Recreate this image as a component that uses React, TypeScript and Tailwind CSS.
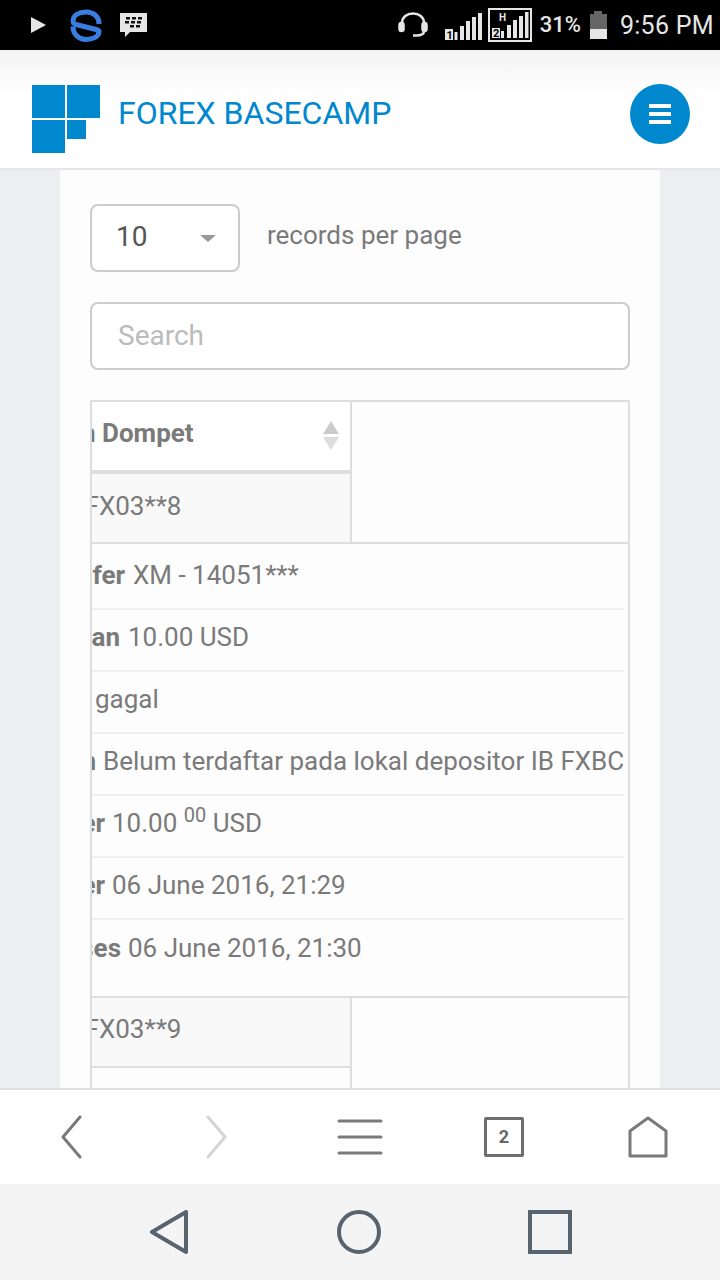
const FONT = "font-['Roboto',sans-serif]";

const DETAILS = [
  { label: "Akun Transfer", value: "XM - 14051***", clip: "w-[33px] mr-[8px]" },
  { label: "Permintaan", value: "10.00 USD", clip: "w-[28px] mr-[8px]" },
  { label: "Status", value: "gagal", clip: "w-0 mr-[3px]" },
  { label: "Keterangan", value: "Belum terdaftar pada lokal depositor IB FXBC", clip: "w-[4px] mr-[7px]" },
  { label: "Transfer", value: <>10.00 <sup className="text-[20px] leading-none">00</sup> USD</>, clip: "w-[13px] mr-[7px]" },
  { label: "Tgl Transfer", value: "06 June 2016, 21:29", clip: "w-[13px] mr-[7px]" },
  { label: "Tgl Proses", value: "06 June 2016, 21:30", clip: "w-[29px] mr-[7px]" },
];

function StatusBar() {
  return (
    <div className={`flex h-[50px] shrink-0 items-center bg-black pl-[31px] pr-[6px] ${FONT} text-[#e6e6e6]`}>
      <svg width="15" height="16" viewBox="0 0 15 16"><path d="M0 0l15 8-15 8z" fill="#e6e6e6" /></svg>
      <svg className="ml-[24px]" width="32" height="33" viewBox="0 0 32 33" fill="none" stroke="#3a7de0" strokeWidth="5" strokeLinejoin="round">
        <path d="M29 15C29 7 23 3 16 3 9 3 3 6 3 12c0 2 1 3 3 3.500l20 5c2 .5 3 1 3 2 0 5-6 8-13 8-7 0-13-5-13-13" />
      </svg>
      <svg className="ml-[17px]" width="28" height="26" viewBox="0 0 28 26">
        <path d="M1 1h27v19H11l-5 5v-5H1z" fill="#e6e6e6" />
        <g fill="#111">
          <rect x="7" y="5" width="4" height="2.5" /><rect x="13" y="5" width="4" height="2.5" /><rect x="19" y="5" width="4" height="2.5" />
          <rect x="6" y="9" width="4" height="2.5" /><rect x="12" y="9" width="4" height="2.5" /><rect x="18" y="9" width="4" height="2.5" />
          <rect x="11" y="13" width="4" height="2.5" /><rect x="17" y="13" width="4" height="2.5" />
        </g>
      </svg>
      <svg className="ml-auto" width="30" height="26" viewBox="0 0 30 26" fill="none" stroke="#e6e6e6" strokeWidth="2.5">
        <path d="M4 13V11C4 5 9 1.500 15 1.500S26 5 26 11v2" />
        <rect x="1.500" y="11" width="4" height="8" rx="2" fill="#e6e6e6" />
        <rect x="24.500" y="11" width="4" height="8" rx="2" fill="#e6e6e6" />
        <path d="M26 19c0 3-3 4.500-8 4.500h-3" />
      </svg>
      <svg className="ml-[17px] mt-[1px]" width="38" height="28" viewBox="0 0 38 28" fill="#e6e6e6">
        <rect x="0" y="17" width="8" height="11" /><rect x="9.500" y="20" width="3" height="8" /><rect x="15" y="14" width="4" height="14" />
        <rect x="21" y="9" width="4" height="19" /><rect x="27" y="5" width="4" height="23" /><rect x="33" y="1" width="4" height="27" />
        <text x="1.500" y="27" fontSize="11" fontWeight="700" fill="#000" fontFamily="Roboto, sans-serif">1</text>
      </svg>
      <svg className="ml-[5px]" width="44" height="34" viewBox="0 0 44 34" fill="#e6e6e6">
        <rect x="1" y="1" width="42" height="32" fill="none" stroke="#e6e6e6" strokeWidth="2" />
        <rect x="4" y="20" width="8" height="10" /><rect x="13" y="23" width="3" height="7" /><rect x="19" y="17" width="4" height="13" />
        <rect x="25" y="12" width="4" height="18" /><rect x="31" y="8" width="4" height="22" /><rect x="37" y="4" width="3.500" height="26" />
        <text x="5" y="29" fontSize="11" fontWeight="700" fill="#000" fontFamily="Roboto, sans-serif">2</text>
        <text x="11" y="13" fontSize="10" fontWeight="700" fill="#e6e6e6" fontFamily="Roboto, sans-serif">H</text>
      </svg>
      <span className="ml-[8px] text-[22px] font-medium leading-none">31%</span>
      <div className="ml-[9px] flex h-[28px] w-[17px] flex-col items-center">
        <div className="h-[3px] w-[8px] bg-[#666]" />
        <div className="h-[15px] w-full bg-[#666]" />
        <div className="h-[10px] w-full bg-[#e6e6e6]" />
      </div>
      <span className="ml-[13px] text-[25px] leading-none tracking-[0.3px]">9:56 PM</span>
    </div>
  );
}

function Header() {
  return (
    <div className="flex h-[120px] shrink-0 items-start border-b-2 border-[#e6e6e6] bg-gradient-to-b from-[#f3f3f3] to-white to-40% pl-[32px] pr-[30px] pt-[34px]">
      <svg className="mt-[1px]" width="68" height="68" viewBox="0 0 68 68" fill="#0088cf">
        <rect x="0" y="0" width="33" height="33" />
        <rect x="35" y="0" width="33" height="33" />
        <rect x="0" y="35" width="33" height="33" />
        <rect x="35" y="35" width="19" height="19" />
      </svg>
      <span className={`ml-[18px] mt-[13px] text-[32px] leading-[32px] text-[#0088cf] ${FONT}`}>FOREX BASECAMP</span>
      <button className="ml-auto flex h-[60px] w-[60px] flex-col items-center justify-center gap-[4px] rounded-full bg-[#0088cf]">
        <span className="h-[4px] w-[22px] bg-white" />
        <span className="h-[4px] w-[22px] bg-white" />
        <span className="h-[4px] w-[22px] bg-white" />
      </button>
    </div>
  );
}

function DataTable() {
  return (
    <div className="mt-[30px] w-[540px] border-x-2 border-t-2 border-[#dddddd] text-[26px] text-[#7a7a7a]">
      <div className="flex">
        <div className="w-[260px] border-r-2 border-[#dddddd]">
          <div className="flex h-[72px] items-center overflow-hidden whitespace-nowrap border-b-[4px] border-[#dddddd] bg-white pr-[10px] font-bold">
            <span className="mb-[6px] ml-[-11px]">n Dompet</span>
            <svg className="ml-auto" width="18" height="30" viewBox="0 0 18 30"><path d="M9 0l8 13H1z" fill="#cccccc" /><path d="M1 16h16l-8 13z" fill="#dddddd" /></svg>
          </div>
          <div className="flex h-[68px] items-center overflow-hidden whitespace-nowrap bg-[#f9f9f9] pb-[4px]">
            <span className="ml-[-26px]">NFX03**8</span>
          </div>
        </div>
      </div>
      <div className="flex flex-col border-t-2 border-[#dddddd] pb-[14px] pr-[4px] pt-[4px]">
        {DETAILS.map((d, i) => (
          <div key={d.label} className={`flex h-[62px] items-center whitespace-nowrap pb-[6px] ${i < DETAILS.length - 1 ? "border-b-2 border-[#f0f0f0]" : ""}`}>
            <span className={`flex shrink-0 justify-end overflow-hidden font-bold ${d.clip}`}><span className="shrink-0">{d.label}</span></span>
            <span>{d.value}</span>
          </div>
        ))}
      </div>
      <div className="flex border-t-2 border-[#dddddd]">
        <div className="w-[260px] border-r-2 border-[#dddddd]">
          <div className="flex h-[70px] items-center overflow-hidden whitespace-nowrap border-b-2 border-[#dddddd] bg-[#f9f9f9] pb-[6px]">
            <span className="ml-[-26px]">NFX03**9</span>
          </div>
          <div className="h-[40px]" />
        </div>
      </div>
    </div>
  );
}

function BrowserBar() {
  return (
    <div className="flex h-[96px] shrink-0 items-center border-t-2 border-[#e0e0e0] bg-white">
      <svg className="ml-[60px]" width="24" height="44" viewBox="0 0 24 44" fill="none" stroke="#7a7a7a" strokeWidth="3" strokeLinecap="round" strokeLinejoin="round"><path d="M20 2L3 22l17 20" /></svg>
      <svg className="ml-[120px]" width="24" height="44" viewBox="0 0 24 44" fill="none" stroke="#d4d4d4" strokeWidth="3" strokeLinecap="round" strokeLinejoin="round"><path d="M4 2l17 20L4 42" /></svg>
      <svg className="ml-[109px]" width="46" height="38" viewBox="0 0 46 38" fill="none" stroke="#7a7a7a" strokeWidth="3" strokeLinecap="round"><path d="M2 3h42M2 19h42M2 35h42" /></svg>
      <div className={`ml-[101px] flex h-[40px] w-[40px] items-center justify-center rounded-[2px] border-[3px] border-[#6e6e6e] text-[18px] font-bold leading-none text-[#666] ${FONT}`}>2</div>
      <svg className="ml-[104px]" width="40" height="42" viewBox="0 0 40 42" fill="none" stroke="#7a7a7a" strokeWidth="3" strokeLinejoin="round"><path d="M2 15L20 2l18 13v25H2z" /></svg>
    </div>
  );
}

function NavBar() {
  return (
    <div className="flex h-[96px] shrink-0 items-center bg-[#f4f4f4]">
      <svg className="ml-[149px]" width="40" height="44" viewBox="0 0 40 44" fill="none" stroke="#566470" strokeWidth="4" strokeLinejoin="round"><path d="M37 2v40L3 22z" /></svg>
      <svg className="ml-[148px]" width="44" height="44" viewBox="0 0 44 44" fill="none" stroke="#566470" strokeWidth="4"><circle cx="22" cy="22" r="20" /></svg>
      <svg className="ml-[147px]" width="44" height="44" viewBox="0 0 44 44" fill="none" stroke="#566470" strokeWidth="4"><rect x="2" y="2" width="40" height="40" /></svg>
    </div>
  );
}

export default function App() {
  return (
    <div className={`flex h-[1280px] w-[720px] flex-col overflow-hidden bg-[#eceef2] ${FONT}`}>
      <StatusBar />
      <Header />
      <main className="min-h-0 flex-1 overflow-hidden px-[60px]">
        <div className="h-full bg-[#fdfdfd] px-[30px] pt-[34px]">
          <div className="flex items-center">
            <div className="flex h-[68px] w-[150px] items-center justify-between rounded-[8px] border-2 border-[#cccccc] bg-white pl-[24px] pr-[22px] text-[28px] text-[#555555]">
              <span className="mb-[2px]">10</span>
              <span className="h-0 w-0 border-x-[8px] border-t-[7px] border-x-transparent border-t-[#999999]" />
            </div>
            <span className="mb-[6px] ml-[27px] text-[26px] text-[#7a7a7a]">records per page</span>
          </div>
          <div className="mt-[30px] flex h-[68px] w-[540px] items-center rounded-[8px] border-2 border-[#cccccc] bg-white pl-[26px] text-[28px] text-[#bbbbbb]">
            Search
          </div>
          <DataTable />
        </div>
      </main>
      <BrowserBar />
      <NavBar />
    </div>
  );
}
